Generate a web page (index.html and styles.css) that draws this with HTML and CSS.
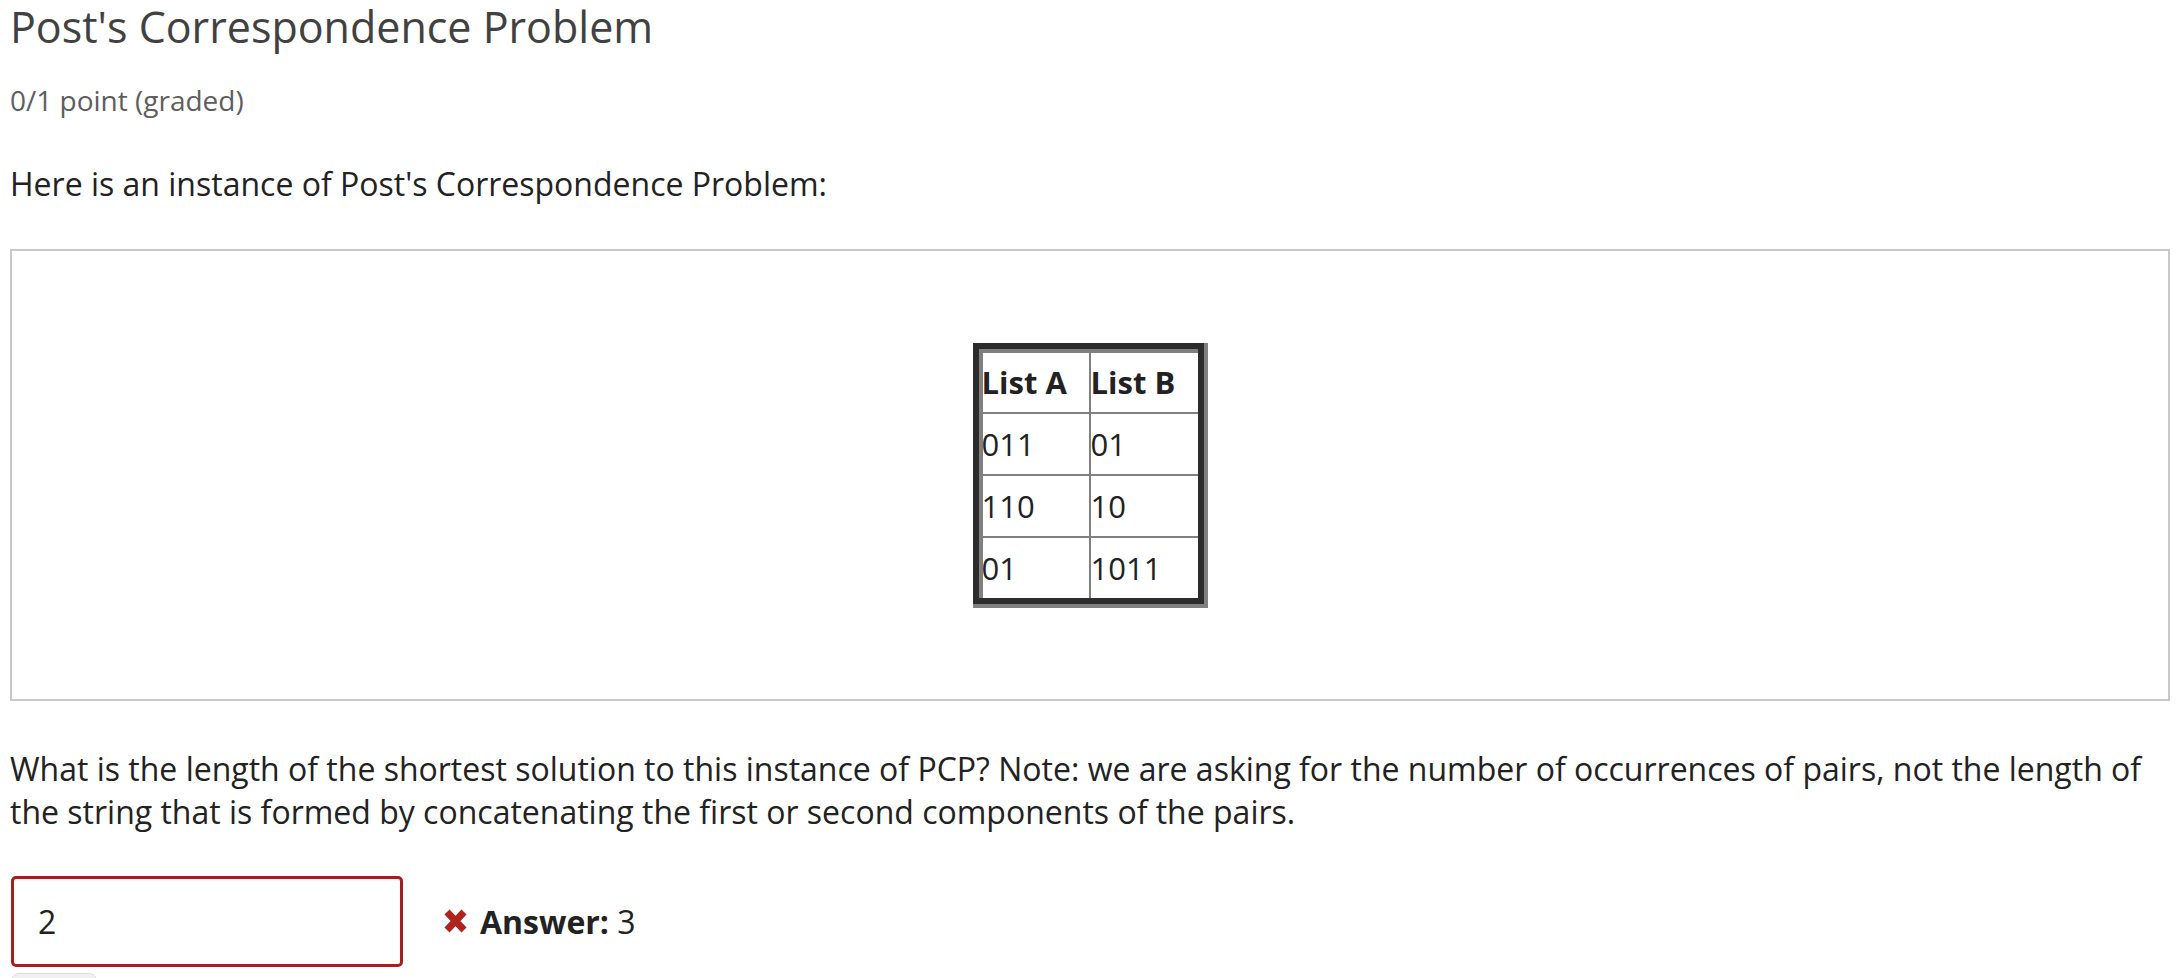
FILE: index.html
```html
<!DOCTYPE html>
<html>
<head>
<meta charset="utf-8">
<link rel="stylesheet" href="styles.css">
</head>
<body>
<div class="problem">
  <h3 class="title">Post's Correspondence Problem</h3>
  <div class="points">0/1 point (graded)</div>
  <p class="intro">Here is an instance of Post's Correspondence Problem:</p>
  <div class="figure">
    <div class="frame">
      <table class="pcp">
        <tr><th>List A</th><th>List B</th></tr>
        <tr><td>011</td><td>01</td></tr>
        <tr><td>110</td><td>10</td></tr>
        <tr><td>01</td><td>1011</td></tr>
      </table>
    </div>
  </div>
  <p class="question">What is the length of the shortest solution to this instance of PCP? Note: we are asking for the number of occurrences of pairs, not the length of the string that is formed by concatenating the first or second components of the pairs.</p>
  <div class="answer-row">
    <input class="answer-input" type="text" value="2">
    <span class="status">
      <svg class="xmark" width="25" height="26" viewBox="0 0 25 26" aria-hidden="true">
        <path d="M4 4 L21 22 M21 4 L4 22" stroke="#b0221e" stroke-width="7" stroke-linecap="butt" fill="none"/>
      </svg>
      <b>Answer:</b>&nbsp;3
    </span>
  </div>
  <button class="submit" aria-label="Submit"></button>
</div>
</body>
</html>
```
FILE: styles.css
```css
html, body {
  margin: 0;
  padding: 0;
  background: #fff;
}
body {
  font-family: "Open Sans", "Noto Sans", sans-serif;
  color: #313131;
}
.problem {
  padding: 0 14px 0 10px;
}
.title {
  margin: 0;
  font-size: 43px;
  font-weight: 400;
  line-height: 54px;
  color: #414141;
}
.points {
  margin-top: 28px;
  font-size: 28px;
  line-height: 36px;
  color: #5e5e5e;
}
.intro {
  margin: 44px 0 0 0;
  font-size: 32px;
  line-height: 44px;
  color: #222;
}
.figure {
  margin-top: 43px;
  border: 2px solid #c8c8c8;
  height: 448px;
  display: flex;
  align-items: center;
  justify-content: center;
}
.frame {
  display: inline-block;
  border-right: 4px solid #808080;
  border-bottom: 4px solid #808080;
}
.pcp {
  border: 6px solid #2c2c2c;
  border-collapse: separate;
  border-spacing: 0;
  padding: 3px 0 0 3px;
  box-shadow: inset 4px 4px 0 #808080;
  font-size: 31px;
  color: #222;
}
.pcp th, .pcp td {
  border-right: 2px solid #808080;
  border-bottom: 2px solid #808080;
  width: 107px;
  height: 60px;
  padding: 0;
  text-align: left;
  vertical-align: middle;
  line-height: 40px;
}
.pcp th {
  font-weight: 700;
}
.pcp tr > :last-child {
  border-right: none;
}
.pcp tr:last-child > * {
  border-bottom: none;
}
.question {
  margin: 46px 0 0 0;
  font-size: 32px;
  line-height: 43.3px;
  color: #222;
}
.answer-row {
  margin-top: 42px;
  display: flex;
  align-items: center;
  gap: 40px;
}
.answer-input {
  box-sizing: border-box;
  width: 392px;
  height: 91px;
  margin: 0 0 0 1px;
  border: 3px solid #a42020;
  border-radius: 5px;
  box-shadow: inset 0 1px 3px rgba(0,0,0,0.08);
  padding: 0 24px;
  font-family: "Open Sans", "Noto Sans", sans-serif;
  font-size: 32px;
  color: #222;
  outline: none;
}
.status {
  font-size: 32px;
  color: #222;
  display: flex;
  align-items: center;
}
.xmark {
  display: block;
  margin-right: 12px;
}
.submit {
  display: block;
  margin: 6px 0 0 1px;
  width: 86px;
  height: 50px;
  border: 1px solid #ddd;
  border-radius: 8px;
  background: #f1f1f1;
}
```
